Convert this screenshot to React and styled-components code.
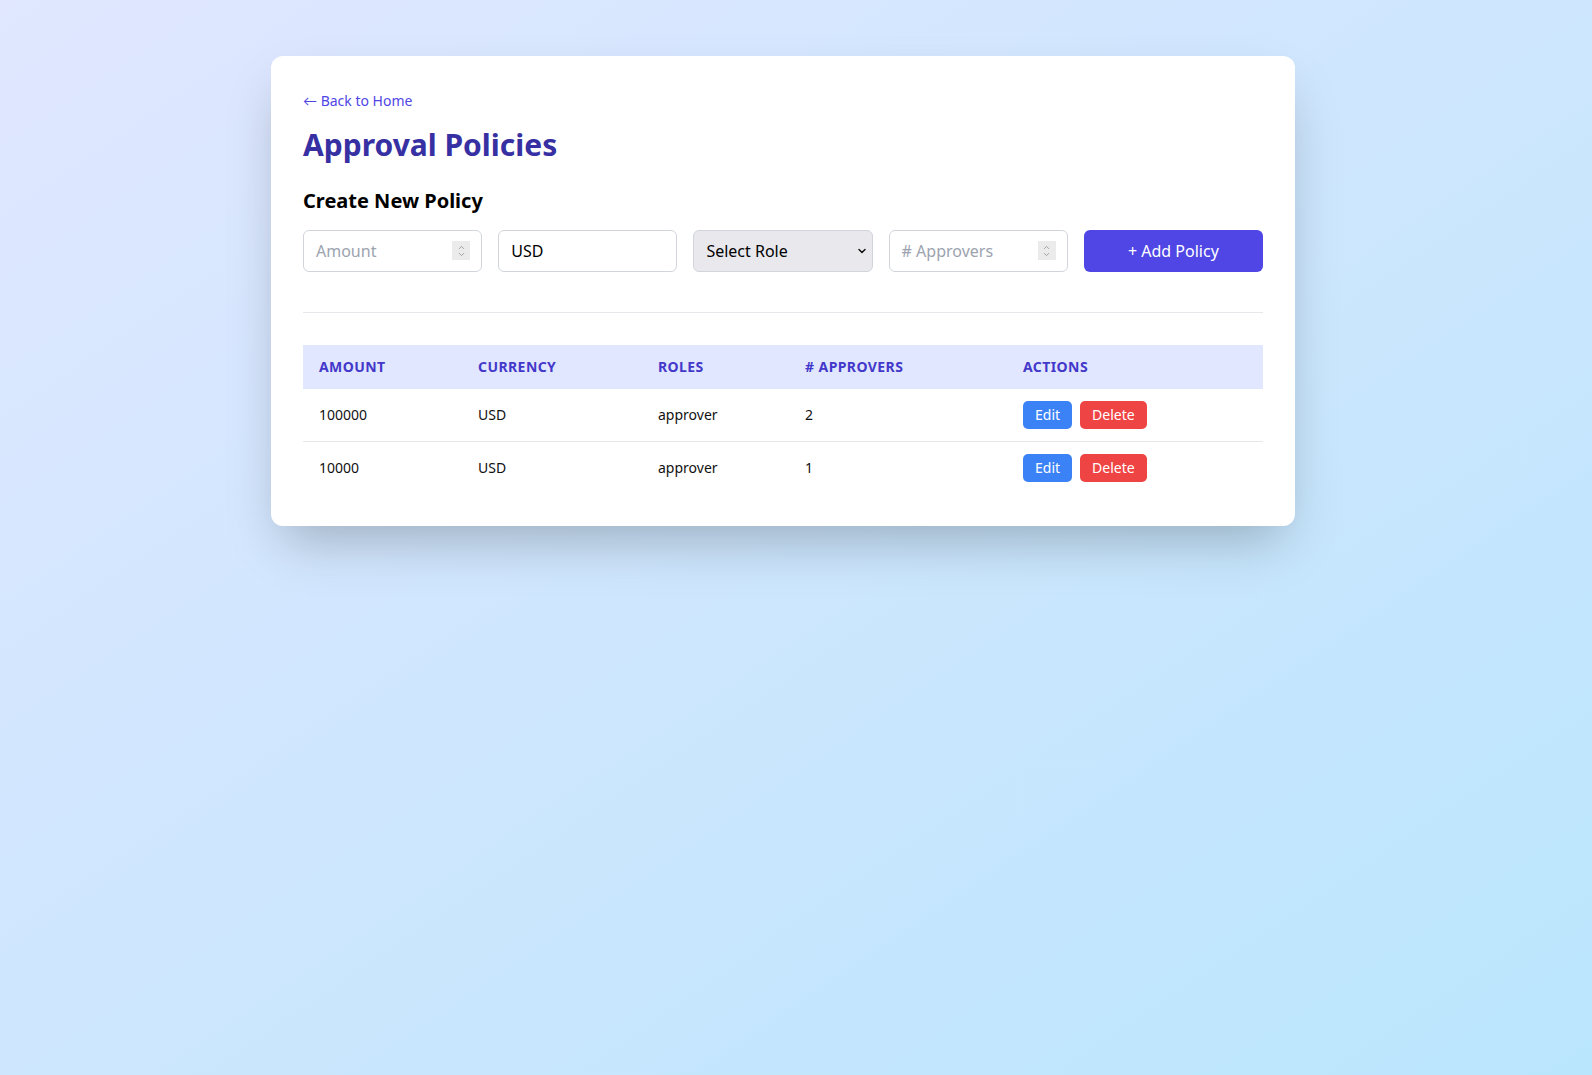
import React, { useState } from 'react';
import styled, { createGlobalStyle } from 'styled-components';
import { ChevronDown, ChevronUp } from 'lucide-react';

const GlobalStyle = createGlobalStyle`
  html, body {
    margin: 0;
    padding: 0;
  }
  body {
    min-height: 1075px;
    font-family: "Noto Sans", Lato, "Liberation Sans", sans-serif;
    background: linear-gradient(to bottom right, #e0e7ff, #bae6fd);
    color: #111827;
  }
  * {
    box-sizing: border-box;
  }
`;

const Page = styled.div`
  padding: 56px 26px 0 0;
`;

const Card = styled.main`
  width: 1024px;
  margin: 0 auto;
  padding: 32px;
  background: #fff;
  border-radius: 12px;
  box-shadow: 0 25px 50px -12px rgba(0, 0, 0, 0.25);
`;

const BackLink = styled.a`
  display: inline-block;
  font-size: 14px;
  line-height: 20px;
  color: #4f46e5;
  text-decoration: none;
  margin-top: 3px;
`;

const Title = styled.h1`
  margin: 16px 0 24px;
  font-size: 30px;
  line-height: 36px;
  font-weight: 700;
  color: #3730a3;
`;

const SectionTitle = styled.h2`
  margin: 0 0 15px;
  font-size: 20px;
  line-height: 28px;
  font-weight: 700;
  color: #000;
`;

const Form = styled.form`
  display: grid;
  grid-template-columns: repeat(5, 1fr);
  gap: 16px;
`;

const FieldWrap = styled.div`
  position: relative;
`;

const Field = styled.input`
  width: 100%;
  height: 42px;
  padding: 8px 12px;
  font: inherit;
  font-size: 16px;
  line-height: 24px;
  color: #000;
  background: #fff;
  border: 1px solid #d1d5db;
  border-radius: 6px;
  outline: none;
  appearance: textfield;

  &::placeholder {
    color: #9ca3af;
  }

  &::-webkit-inner-spin-button,
  &::-webkit-outer-spin-button {
    -webkit-appearance: none;
    margin: 0;
  }
`;

const Spinner = styled.span`
  position: absolute;
  right: 12px;
  top: 11px;
  width: 18px;
  height: 19px;
  display: flex;
  flex-direction: column;
  align-items: center;
  justify-content: center;
  background: #ebebeb;
  color: #8a8a8a;
  pointer-events: none;

  svg {
    display: block;
    margin: -1px 0;
  }
`;

const Select = styled.select`
  appearance: none;
  width: 100%;
  height: 42px;
  padding: 8px 12px;
  font: inherit;
  font-size: 16px;
  line-height: 24px;
  color: #000;
  background: #e9e9ed;
  border: 1px solid #d1d5db;
  border-radius: 6px;
  outline: none;
`;

const Chevron = styled(ChevronDown)`
  position: absolute;
  right: 5px;
  top: 15px;
  pointer-events: none;
  color: #111;
`;

const PrimaryButton = styled.button`
  height: 42px;
  font: inherit;
  font-size: 16px;
  color: #fff;
  background: #4f46e5;
  border: none;
  border-radius: 6px;
  cursor: pointer;
`;

const Divider = styled.hr`
  margin: 40px 0 32px;
  border: none;
  border-top: 1px solid #e5e7eb;
`;

const Table = styled.table`
  width: 100%;
  border-collapse: collapse;
  font-size: 14px;
`;

const HeadRow = styled.tr`
  background: #e0e7ff;
`;

const Th = styled.th`
  width: ${p => (p.$w ? `${p.$w}px` : 'auto')};
  padding: 12px 16px;
  text-align: left;
  font-size: 14px;
  line-height: 20px;
  font-weight: 700;
  text-transform: uppercase;
  letter-spacing: 0.03em;
  color: #4338ca;
`;

const Row = styled.tr`
  & + & {
    border-top: 1px solid #e5e7eb;
  }
`;

const Td = styled.td`
  padding: 12px 16px;
  line-height: 20px;
  color: #111;
`;

const Actions = styled.div`
  display: flex;
  gap: 8px;
`;

const SmallButton = styled.button`
  height: 28px;
  padding: 0 12px;
  font: inherit;
  font-size: 14px;
  color: #fff;
  background: ${p => (p.$danger ? '#ef4444' : '#3b82f6')};
  border: none;
  border-radius: 5px;
  cursor: pointer;
`;

const initialPolicies = [
  { id: 1, amount: 100000, currency: 'USD', roles: 'approver', approvers: 2 },
  { id: 2, amount: 10000, currency: 'USD', roles: 'approver', approvers: 1 },
];

const NumberField = ({ placeholder }) => (
  <FieldWrap>
    <Field type="number" placeholder={placeholder} />
    <Spinner>
      <ChevronUp size={9} strokeWidth={2} />
      <ChevronDown size={9} strokeWidth={2} />
    </Spinner>
  </FieldWrap>
);

const App = () => {
  const [policies, setPolicies] = useState(initialPolicies);
  const [currency, setCurrency] = useState('USD');

  const removePolicy = id => {
    setPolicies(prev => prev.filter(p => p.id !== id));
  };

  return (
    <Page>
      <GlobalStyle />
      <Card>
        <BackLink href="#">← Back to Home</BackLink>
        <Title>Approval Policies</Title>
        <SectionTitle>Create New Policy</SectionTitle>
        <Form onSubmit={e => e.preventDefault()}>
          <NumberField placeholder="Amount" />
          <Field value={currency} onChange={e => setCurrency(e.target.value)} />
          <FieldWrap>
            <Select defaultValue="">
              <option value="">Select Role</option>
              <option value="approver">approver</option>
              <option value="admin">admin</option>
            </Select>
            <Chevron size={12} strokeWidth={3} />
          </FieldWrap>
          <NumberField placeholder="# Approvers" />
          <PrimaryButton type="submit">+ Add Policy</PrimaryButton>
        </Form>
        <Divider />
        <Table>
          <thead>
            <HeadRow>
              <Th $w={159}>Amount</Th>
              <Th $w={180}>Currency</Th>
              <Th $w={147}>Roles</Th>
              <Th $w={218}># Approvers</Th>
              <Th>Actions</Th>
            </HeadRow>
          </thead>
          <tbody>
            {policies.map(p => (
              <Row key={p.id}>
                <Td>{p.amount}</Td>
                <Td>{p.currency}</Td>
                <Td>{p.roles}</Td>
                <Td>{p.approvers}</Td>
                <Td>
                  <Actions>
                    <SmallButton>Edit</SmallButton>
                    <SmallButton $danger onClick={() => removePolicy(p.id)}>
                      Delete
                    </SmallButton>
                  </Actions>
                </Td>
              </Row>
            ))}
          </tbody>
        </Table>
      </Card>
    </Page>
  );
};

export default App;
